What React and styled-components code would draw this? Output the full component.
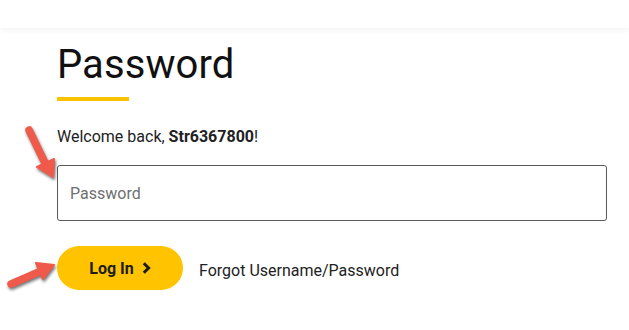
import React from "react";
import styled, { createGlobalStyle } from "styled-components";

const Global = createGlobalStyle`
  html, body { margin: 0; padding: 0; background: #fff; }
  body { font-family: Roboto, "Liberation Sans", Arial, sans-serif; color: #1a1a1a; }
  * { box-sizing: border-box; }
`;

const Page = styled.div`
  position: relative;
  width: 629px;
  height: 330px;
  overflow: hidden;
  background: #fff;
`;

const Header = styled.header`
  height: 28px;
  background: #fff;
  box-shadow: 0 3px 5px rgba(0, 0, 0, 0.045);
  position: relative;
  z-index: 1;
`;

const Main = styled.main`
  padding: 13px 22px 0 57px;
  display: flex;
  flex-direction: column;
`;

const Title = styled.h1`
  margin: 0;
  font-size: 40px;
  line-height: 48px;
  font-weight: 400;
  color: #111;
  letter-spacing: 0.1px;
`;

const Accent = styled.div`
  width: 72px;
  height: 4px;
  margin-top: 8px;
  background: #fcc200;
`;

const Welcome = styled.p`
  margin: 24px 0 0;
  font-size: 16px;
  line-height: 24px;
  color: #222;
  b { font-weight: 700; color: #222; }
`;

const Input = styled.input`
  margin-top: 16px;
  width: 550px;
  height: 56px;
  border: 1px solid #5c5956;
  border-radius: 3px;
  padding: 0 12px;
  font-family: inherit;
  font-size: 16px;
  color: #222;
  outline: none;
  &::placeholder { color: #6f6f6f; }
`;

const Actions = styled.div`
  margin-top: 25px;
  display: flex;
  align-items: center;
  gap: 16px;
`;

const LoginButton = styled.button`
  width: 126px;
  height: 44px;
  border: none;
  border-radius: 22px;
  background: #ffc300;
  display: flex;
  align-items: center;
  justify-content: center;
  gap: 8px;
  padding: 0;
  font-family: inherit;
  font-size: 16px;
  font-weight: 700;
  color: #1c1c1c;
  cursor: pointer;
`;

const ForgotLink = styled.a`
  font-size: 16px;
  line-height: 24px;
  color: #222;
  text-decoration: none;
  padding-top: 6px;
`;

const Overlay = styled.svg`
  position: absolute;
  left: 0;
  top: 0;
  pointer-events: none;
  filter: drop-shadow(1.5px 2px 1.5px rgba(0, 0, 0, 0.55));
`;

const Chevron = () => (
  <svg width="9" height="12" viewBox="0 0 9 12" aria-hidden="true">
    <path d="M1.8 1.2 L6.6 6 L1.8 10.8" fill="none" stroke="#1c1c1c" strokeWidth="3" strokeLinejoin="miter" />
  </svg>
);

const Arrow = ({ x1, y1, x2, y2, tx, ty, w1x, w1y, w2x, w2y }) => (
  <g>
    <line x1={x1} y1={y1} x2={x2} y2={y2} stroke="#ef5a4b" strokeWidth="7.5" strokeLinecap="round" />
    <polygon points={`${tx},${ty} ${w1x},${w1y} ${w2x},${w2y}`} fill="#ef5a4b" stroke="#ef5a4b" strokeWidth="2" strokeLinejoin="round" />
  </g>
);

export default function App() {
  return (
    <>
      <Global />
      <Page>
        <Header />
        <Main>
          <Title>Password</Title>
          <Accent />
          <Welcome>
            Welcome back, <b>Str6367800</b>!
          </Welcome>
          <Input type="password" placeholder="Password" />
          <Actions>
            <LoginButton>
              Log In <Chevron />
            </LoginButton>
            <ForgotLink href="#">Forgot Username/Password</ForgotLink>
          </Actions>
        </Main>
        <Overlay width="629" height="330" viewBox="0 0 629 330">
          <Arrow x1={29} y1={130} x2={45} y2={163} tx={53} ty={177} w1x={54} w1y={159} w2x={37} w2y={167} />
          <Arrow x1={11} y1={284} x2={41} y2={271} tx={54} ty={265} w1x={43} w1y={279} w2x={36} w2y={263} />
        </Overlay>
      </Page>
    </>
  );
}
